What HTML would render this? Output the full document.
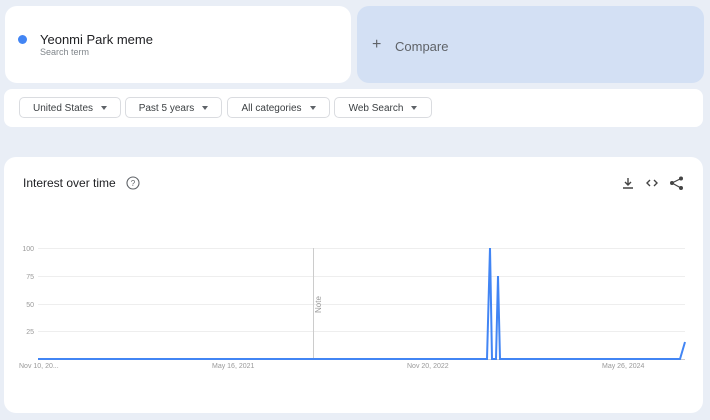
<!DOCTYPE html>
<html><head><style>
body{margin:0;width:710px;height:420px;background:#e9eef6;font-family:"Liberation Sans",sans-serif;position:relative;overflow:hidden}
.abs{position:absolute}
.card{background:#fff;border-radius:12px}
.pill{position:absolute;top:97px;height:21px;border:1px solid #dadce0;border-radius:5px;background:#fff;font-size:10px;color:#3c4043;line-height:21px;text-align:center;box-sizing:border-box}
.pill:after{content:"";display:inline-block;margin-left:8px;border-left:3px solid transparent;border-right:3px solid transparent;border-top:4px solid #5f6368;vertical-align:1px}
</style></head><body>
<div class="abs card" style="left:5px;top:6px;width:346px;height:77px"></div>
<div class="abs" style="left:18px;top:35px;width:9px;height:9px;border-radius:50%;background:#4285f4"></div>
<div class="abs" style="left:40px;top:32px;font-size:13px;color:#202124">Yeonmi Park meme</div>
<div class="abs" style="left:40px;top:47px;font-size:9px;color:#80868b">Search term</div>
<div class="abs" style="left:357px;top:6px;width:347px;height:77px;background:#d3e0f4;border-radius:12px"></div>
<div class="abs" style="left:372px;top:36px;font-size:16px;color:#5f6368">+</div>
<div class="abs" style="left:395px;top:39px;font-size:13px;color:#5f6368">Compare</div>
<div class="abs card" style="left:4px;top:89px;width:699px;height:38px;border-radius:8px"></div>
<div class="pill" style="left:19px;width:102px">United States</div>
<div class="pill" style="left:125px;width:97px">Past 5 years</div>
<div class="pill" style="left:227px;width:103px">All categories</div>
<div class="pill" style="left:334px;width:98px">Web Search</div>
<div class="abs card" style="left:4px;top:157px;width:699px;height:256px"></div>
<div class="abs" style="left:23px;top:176px;font-size:12px;color:#202124">Interest over time</div>
<svg class="abs" style="left:0;top:0" width="710" height="420">
<circle cx="133" cy="183" r="6" fill="none" stroke="#5f6368" stroke-width="1.1"/>
<text x="133" y="186" font-size="8" text-anchor="middle" fill="#5f6368" font-family="Liberation Sans">?</text>
<path d="M628 178v7M625 182l3 3 3-3M623 188h10" stroke="#444" stroke-width="1.4" fill="none"/>
<path d="M650 180l-3 3 3 3M654 180l3 3-3 3" stroke="#444" stroke-width="1.4" fill="none"/>
<circle cx="681" cy="178.5" r="2" fill="#444"/><circle cx="672" cy="183" r="2" fill="#444"/><circle cx="681" cy="188" r="2" fill="#444"/>
<path d="M681 178.5L672 183L681 188" stroke="#444" stroke-width="1.2" fill="none"/>
<g stroke="#eee" stroke-width="1">
<line x1="38" y1="248.5" x2="685" y2="248.5"/><line x1="38" y1="276.5" x2="685" y2="276.5"/>
<line x1="38" y1="304.5" x2="685" y2="304.5"/><line x1="38" y1="331.5" x2="685" y2="331.5"/>
</g>
<line x1="38" y1="359.5" x2="685" y2="359.5" stroke="#ccc"/>
<line x1="313.5" y1="248" x2="313.5" y2="359" stroke="#ccc"/>
<text transform="translate(321,313) rotate(-90)" font-size="8" fill="#999" font-family="Liberation Sans">Note</text>
<g font-size="7" fill="#999" font-family="Liberation Sans" text-anchor="end">
<text x="34" y="251">100</text><text x="34" y="279">75</text><text x="34" y="307">50</text><text x="34" y="334">25</text>
</g>
<g font-size="7" fill="#999" font-family="Liberation Sans">
<text x="19" y="368">Nov 10, 20...</text><text x="212" y="368">May 16, 2021</text><text x="407" y="368">Nov 20, 2022</text><text x="602" y="368">May 26, 2024</text>
</g>
<polyline points="38,359 487,359 490,248 492,359 496,359 498,276 500,359 680,359 685,342" fill="none" stroke="#4285f4" stroke-width="2"/>
</svg>
</body></html>
